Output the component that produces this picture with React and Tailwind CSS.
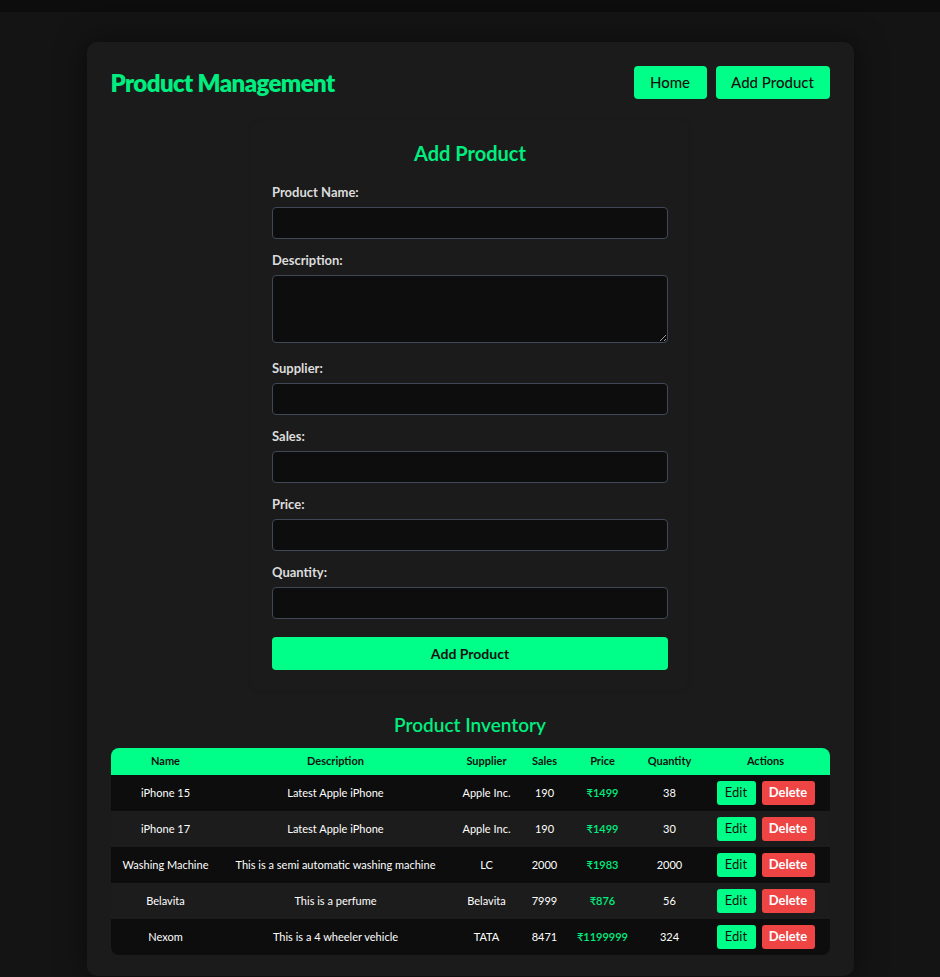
import React from 'react';

const products = [
  { name: 'iPhone 15', description: 'Latest Apple iPhone', supplier: 'Apple Inc.', sales: 190, price: 1499, quantity: 38 },
  { name: 'iPhone 17', description: 'Latest Apple iPhone', supplier: 'Apple Inc.', sales: 190, price: 1499, quantity: 30 },
  { name: 'Washing Machine', description: 'This is a semi automatic washing machine', supplier: 'LC', sales: 2000, price: 1983, quantity: 2000 },
  { name: 'Belavita', description: 'This is a perfume', supplier: 'Belavita', sales: 7999, price: 876, quantity: 56 },
  { name: 'Nexom', description: 'This is a 4 wheeler vehicle', supplier: 'TATA', sales: 8471, price: 1199999, quantity: 324 },
];

const fields = [
  { label: 'Product Name:', name: 'name' },
  { label: 'Description:', name: 'description', textarea: true },
  { label: 'Supplier:', name: 'supplier' },
  { label: 'Sales:', name: 'sales' },
  { label: 'Price:', name: 'price' },
  { label: 'Quantity:', name: 'quantity' },
];

export default function App() {
  return (
    <div className="min-h-[977px] bg-[#141414] font-['Lato','Noto_Sans',sans-serif]">
      <div className="h-[12px] bg-[#0d0d0d]" />
      <div className="pt-[30px]">
        <div className="mx-auto w-[767px] rounded-[10px] bg-[#1b1b1b] px-[24px] pt-[24px] pb-[21px] shadow-[0_0_30px_rgba(0,0,0,0.5)]">
          {/* header */}
          <div className="flex h-[33px] items-center justify-between">
            <h1 className="text-[24px] leading-[30px] font-extrabold tracking-[-0.6px] text-[#00ee7f]">Product Management</h1>
            <div className="flex gap-[9px]">
              <button className="h-[33px] w-[73px] rounded-[4px] bg-[#00ff88] text-[15px] font-medium text-[#111]">Home</button>
              <button className="h-[33px] w-[114px] rounded-[4px] bg-[#00ff88] text-[15px] font-medium text-[#111]">Add Product</button>
            </div>
          </div>

          {/* form */}
          <div className="mx-auto mt-[22px] w-[436px] rounded-[8px] bg-[#1b1b1b] p-[20px] shadow-[0_0_6px_rgba(0,0,0,0.08)]">
            <h2 className="mb-[19px] text-center text-[20px] leading-[24px] font-bold text-[#00ee7f]">Add Product</h2>
            <form className="flex flex-col">
              {fields.map(f => (
                <div key={f.name} className={`flex flex-col ${f.textarea ? 'mb-[17px]' : 'mb-[13px]'}`}>
                  <label className="mb-[7px] text-[13px] leading-[16px] font-bold text-[#dcdcdc]">{f.label}</label>
                  {f.textarea ? (
                    <textarea
                      name={f.name}
                      className="h-[68px] w-full rounded-[4px] border border-[#404756] bg-[#0d0d0d] p-[8px] text-[13px] text-white outline-none"
                    />
                  ) : (
                    <input
                      name={f.name}
                      className="h-[32px] w-full rounded-[4px] border border-[#404756] bg-[#0d0d0d] px-[8px] text-[13px] text-white outline-none"
                    />
                  )}
                </div>
              ))}
              <button type="button" className="mt-[5px] h-[33px] w-full rounded-[4px] bg-[#00ff88] text-[14px] font-bold text-[#111]">
                Add Product
              </button>
            </form>
          </div>

          {/* inventory */}
          <h2 className="mt-[23px] mb-[11px] text-center text-[19px] leading-[24px] font-semibold text-[#00ee7f]">Product Inventory</h2>
          <div className="overflow-hidden rounded-[8px]">
            <table className="w-full table-fixed border-collapse text-[11px]">
              <colgroup>
                <col className="w-[110px]" />
                <col className="w-[230px]" />
                <col className="w-[72px]" />
                <col className="w-[44px]" />
                <col className="w-[72px]" />
                <col className="w-[62px]" />
                <col className="w-[130px]" />
              </colgroup>
              <thead className="bg-[#00ff88] text-[#111]">
                <tr>
                  {['Name', 'Description', 'Supplier', 'Sales', 'Price', 'Quantity', 'Actions'].map(h => (
                    <th key={h} className="h-[27px] text-center font-bold">{h}</th>
                  ))}
                </tr>
              </thead>
              <tbody>
                {products.map((p, i) => (
                  <tr key={p.name} className={i % 2 === 0 ? 'bg-[#0d0d0d] text-white' : 'bg-[#1c1c1c] text-white'}>
                    <td className="h-[36px] text-center">{p.name}</td>
                    <td className="text-center whitespace-nowrap">{p.description}</td>
                    <td className="text-center">{p.supplier}</td>
                    <td className="text-center">{p.sales}</td>
                    <td className="text-center font-semibold text-[#00ee7f]">₹{p.price}</td>
                    <td className="text-center">{p.quantity}</td>
                    <td className="text-center">
                      <div className="flex justify-center gap-[6px]">
                        <button className="h-[24px] w-[39px] rounded-[3px] bg-[#00ff88] text-[13px] text-[#111]">Edit</button>
                        <button className="h-[24px] w-[53px] rounded-[3px] bg-[#ef4444] text-[13px] font-bold text-white">Delete</button>
                      </div>
                    </td>
                  </tr>
                ))}
              </tbody>
            </table>
          </div>
        </div>
      </div>
    </div>
  );
}
